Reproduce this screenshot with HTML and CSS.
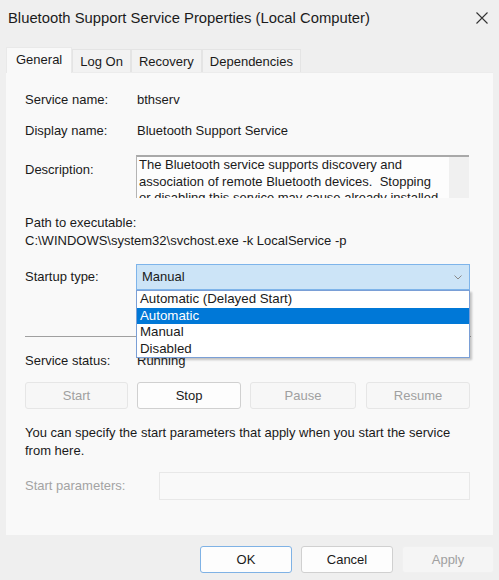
FILE: index.html
```html
<!DOCTYPE html>
<html lang="en">
<head>
    <meta charset="UTF-8">
    <title>Bluetooth Support Service Properties (Local Computer)</title>
    <link rel="stylesheet" href="styles.css">
</head>
<body>

    <div class="titlebar">
        <span class="title">Bluetooth Support Service Properties (Local Computer)</span>
        <svg class="close" width="12" height="12" viewBox="0 0 12 12">
            <path d="M0.5 0.5 L11.5 11.5 M11.5 0.5 L0.5 11.5" stroke="#333" stroke-width="1.1" fill="none"/>
        </svg>
    </div>

    <div class="tabs">
        <div class="tab active">General</div>
        <div class="tab">Log On</div>
        <div class="tab">Recovery</div>
        <div class="tab">Dependencies</div>
    </div>

    <div class="panel">
        <div class="row r-service">
            <span class="label">Service name:</span>
            <span>bthserv</span>
        </div>
        <div class="row r-display">
            <span class="label">Display name:</span>
            <span>Bluetooth Support Service</span>
        </div>
        <div class="row r-desc">
            <span class="label">Description:</span>
            <div class="descbox">
                <div class="desctext">The Bluetooth service supports discovery and<br>association of remote Bluetooth devices.&nbsp; Stopping<br>or disabling this service may cause already installed</div>
                <div class="scroll"></div>
            </div>
        </div>

        <div class="pathlabel">Path to executable:</div>
        <div class="pathvalue">C:\WINDOWS\system32\svchost.exe -k LocalService -p</div>

        <div class="row r-startup">
            <span class="label">Startup type:</span>
            <div class="combo">
                <span>Manual</span>
                <svg class="chev" width="8" height="5" viewBox="0 0 8 5">
                    <path d="M0.5 0.5 L4 4 L7.5 0.5" stroke="#8a8a8a" fill="none" stroke-width="1"/>
                </svg>
                <!-- lista aberta do combo -->
                <div class="dropdown">
                    <div class="opt">Automatic (Delayed Start)</div>
                    <div class="opt selected">Automatic</div>
                    <div class="opt">Manual</div>
                    <div class="opt">Disabled</div>
                </div>
            </div>
        </div>

        <div class="separator"></div>

        <div class="row r-status">
            <span class="label">Service status:</span>
            <span>Running</span>
        </div>

        <div class="actions">
            <button class="btn disabled b-start">Start</button>
            <button class="btn b-stop">Stop</button>
            <button class="btn disabled b-pause">Pause</button>
            <button class="btn disabled b-resume">Resume</button>
        </div>

        <p class="hint">You can specify the start parameters that apply when you start the service<br>from here.</p>

        <div class="row r-params">
            <span class="label2 muted">Start parameters:</span>
            <div class="paraminput"></div>
        </div>
    </div>

    <div class="footer">
        <button class="btn fbtn default">OK</button>
        <button class="btn fbtn">Cancel</button>
        <button class="btn fbtn disabled flat">Apply</button>
    </div>

</body>
</html>
```

FILE: styles.css
```css
body {
    margin: 0;
    width: 499px;
    height: 580px;
    overflow: hidden;
    background-color: #efefef;
    font-family: "Liberation Sans", Arial, sans-serif;
    font-size: 13px;
    color: #1a1a1a;
}
.titlebar {
    height: 36px;
    display: flex;
    align-items: center;
    justify-content: space-between;
    padding: 0 11px 0 8px;
}
.title {
    font-size: 14.8px;
    color: #1b1b1b;
}
.close {
    display: block;
}
.tabs {
    display: flex;
    align-items: flex-end;
    margin: 11px 0 0 6px;
    height: 25px;
}
.tab {
    height: 23px;
    line-height: 23px;
    padding: 0 7px;
    background-color: #f2f2f2;
    border: 1px solid #e4e4e4;
    border-bottom: none;
    box-sizing: border-box;
    color: #1a1a1a;
}
.tab.active {
    height: 26px;
    line-height: 24px;
    padding: 0 9px 0 9px;
    background-color: #f9f9f9;
    margin-bottom: -1px;
    position: relative;
    z-index: 1;
    border-color: #e9e9e9;
}
.panel {
    margin: 0 6px 0 6px;
    height: 463px;
    background-color: #f9f9f9;
    padding: 0 0 0 19px;
    box-sizing: border-box;
    border-top: 1px solid #ececec;
    position: relative;
}
.row {
    display: flex;
    align-items: flex-start;
    line-height: 16px;
}
.label {
    width: 112px;
    flex-shrink: 0;
}
.r-service {
    padding-top: 19px;
}
.r-display {
    margin-top: 15px;
}
.r-desc {
    margin-top: 16px;
}
.r-desc .label {
    padding-top: 7px;
}
.descbox {
    width: 333px;
    height: 43px;
    box-sizing: border-box;
    border-top: 2px solid #a9a9a9;
    border-left: 1px solid #b4b4b4;
    background-color: #fdfdfd;
    display: flex;
    overflow: hidden;
    margin-left: -1px;
}
.desctext {
    flex: 1;
    padding: 0 0 0 2px;
    line-height: 16.5px;
    white-space: nowrap;
    overflow: hidden;
}
.scroll {
    width: 20px;
    background-color: #f0f0f0;
}
.pathlabel {
    margin-top: 17px;
    line-height: 16px;
}
.pathvalue {
    margin-top: 2px;
    line-height: 16px;
}
.r-startup {
    margin-top: 15px;
    align-items: center;
}
.combo {
    position: relative;
    width: 334px;
    height: 26px;
    box-sizing: border-box;
    margin-left: -1px;
    background-color: #cce4f7;
    border: 1px solid #7eb4ea;
    display: flex;
    align-items: center;
    justify-content: space-between;
    padding: 0 7px 0 5px;
}
.dropdown {
    position: absolute;
    top: 25px;
    left: -1px;
    width: 334px;
    box-sizing: border-box;
    background-color: #ffffff;
    border: 1px solid #7a9fd6;
    box-shadow: 2px 2px 2px rgba(0, 0, 0, 0.22);
    z-index: 5;
}
.opt {
    height: 16.5px;
    line-height: 16.5px;
    padding-left: 3px;
    font-size: 13.3px;
}
.opt.selected {
    background-color: #0078d7;
    color: #ffffff;
}
.separator {
    margin-top: 46px;
    width: 446px;
    border-top: 1px solid #a0a0a0;
}
.r-status {
    margin-top: 16px;
}
.actions {
    display: flex;
    gap: 9px;
    margin-top: 13px;
}
.btn {
    font-family: "Liberation Sans", Arial, sans-serif;
    font-size: 13px;
    height: 27px;
    width: 104px;
    background-color: #fdfdfd;
    border: 1px solid #d0d0d0;
    border-radius: 3px;
    color: #1a1a1a;
    padding: 0;
}
.b-start {
    width: 103px;
}
.b-pause {
    width: 106px;
}
.b-resume {
    margin-left: 1px;
}
.btn.disabled {
    background-color: #f7f7f7;
    border-color: #e6e6e6;
    color: #a0a0a0;
}
.hint {
    margin: 15px 0 0 0;
    line-height: 18px;
}
.r-params {
    margin-top: 12px;
    align-items: center;
}
.label2 {
    width: 134px;
    flex-shrink: 0;
}
.muted {
    color: #a3a3a3;
}
.paraminput {
    width: 311px;
    height: 28px;
    box-sizing: border-box;
    border: 1px solid #e8e8e8;
    background-color: #f9f9f9;
}
.footer {
    display: flex;
    justify-content: flex-end;
    gap: 9px;
    margin-top: 11px;
    padding-right: 5px;
}
.fbtn {
    width: 92px;
    height: 27px;
}
.btn.default {
    border-color: #7fb2e5;
}
.btn.flat {
    background-color: #f5f5f5;
    border-color: #f0f0f0;
}
```
